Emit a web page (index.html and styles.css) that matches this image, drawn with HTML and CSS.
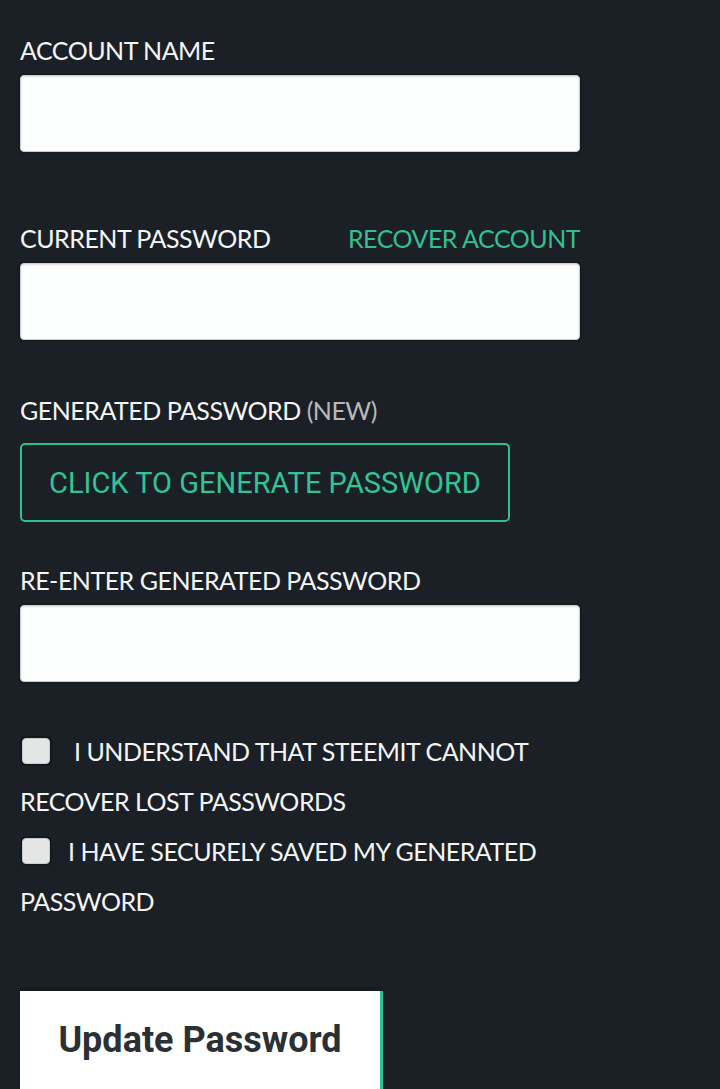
FILE: index.html
```html
<!DOCTYPE html>
<html lang="en">
<head>
    <meta charset="UTF-8">
    <title>Change Password</title>
    <link rel="stylesheet" href="styles.css">
</head>
<body>
<form class="pw-form">
    <div class="field">
        <label class="label">ACCOUNT NAME</label>
        <input class="input" type="text">
    </div>

    <div class="field field-current">
        <div class="label-row">
            <label class="label">CURRENT PASSWORD</label>
            <a class="link" href="#">RECOVER ACCOUNT</a>
        </div>
        <input class="input" type="password">
    </div>

    <div class="field field-generated">
        <label class="label">GENERATED PASSWORD <span class="muted">(NEW)</span></label>
        <button class="btn-outline" type="button">CLICK TO GENERATE PASSWORD</button>
    </div>

    <div class="field field-reenter">
        <label class="label">RE-ENTER GENERATED PASSWORD</label>
        <input class="input" type="password">
    </div>

    <div class="checks">
        <label class="check"><span class="box"></span><span class="gap-a"></span>I UNDERSTAND THAT STEEMIT CANNOT RECOVER LOST PASSWORDS</label>
        <label class="check"><span class="box"></span><span class="gap-b"></span>I HAVE SECURELY SAVED MY GENERATED PASSWORD</label>
    </div>

    <button class="btn-submit" type="submit">Update Password</button>
</form>
</body>
</html>
```

FILE: styles.css
```css
* {
    margin: 0;
    padding: 0;
    box-sizing: border-box;
}

html, body {
    height: 100%;
}

body {
    background-color: #1b2027;
    font-family: Lato, "Noto Sans", sans-serif;
    color: #f4f6f6;
    overflow: hidden;
}

.pw-form {
    width: 600px;
    padding: 35px 20px 0 20px;
}

.label {
    display: block;
    font-size: 25px;
    line-height: 30px;
    letter-spacing: -0.5px;
    color: #f4f6f6;
}

.muted {
    color: #b5b9bc;
}

.label-row {
    display: flex;
    justify-content: space-between;
    align-items: center;
    width: 560px;
}

.link {
    font-size: 25px;
    line-height: 30px;
    letter-spacing: -0.5px;
    color: #33bf93;
    text-decoration: none;
}

.input {
    display: block;
    width: 560px;
    height: 77px;
    margin-top: 10px;
    background-color: #fdfefe;
    border: 1px solid #c9cdcf;
    border-radius: 4px;
    box-shadow: inset 0 1px 2px rgba(0, 0, 0, 0.12), 0 0 0 2px #161b20;
    outline: none;
}

.field-current {
    margin-top: 71px;
}

.field-generated {
    margin-top: 55px;
}

.btn-outline {
    display: block;
    width: 490px;
    height: 79px;
    margin-top: 18px;
    background-color: #1b2027;
    border: 2px solid #2fbf92;
    border-radius: 5px;
    color: #33c396;
    font-family: Roboto, sans-serif;
    font-size: 29px;
    cursor: pointer;
}

.field-reenter {
    margin-top: 43px;
}

.checks {
    margin-top: 44px;
    width: 560px;
}

.check {
    display: block;
    font-size: 25px;
    line-height: 50px;
    letter-spacing: -0.5px;
    color: #f4f6f6;
}

.box {
    display: inline-block;
    width: 28px;
    height: 26px;
    margin-left: 2px;
    vertical-align: -3px;
    background-color: #e4e6e6;
    border: 1px solid #c9cccc;
    border-radius: 4px;
    box-shadow: 0 0 0 2px #13181c;
}

.gap-a {
    display: inline-block;
    width: 24px;
}

.gap-b {
    display: inline-block;
    width: 18px;
}

.btn-submit {
    display: block;
    width: 363px;
    height: 110px;
    margin-top: 65px;
    padding-bottom: 12px;
    background-color: #ffffff;
    border: none;
    border-right: 3px solid #2dbf95;
    box-shadow: 0 -4px 0 #151c1e;
    color: #2b3035;
    font-family: Roboto, sans-serif;
    font-weight: 700;
    font-size: 36px;
    cursor: pointer;
}
```
